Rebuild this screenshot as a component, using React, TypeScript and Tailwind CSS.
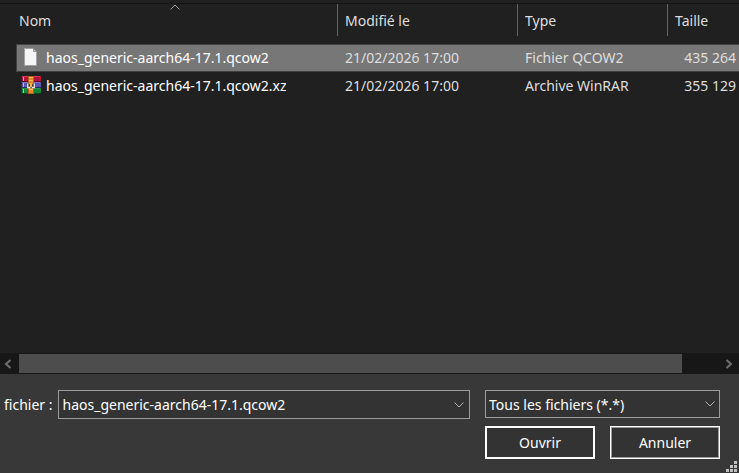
import { useState } from "react";

interface FileEntry {
  name: string;
  modified: string;
  type: string;
  size: string;
  icon: "blank" | "archive";
}

const FILES: FileEntry[] = [
  {
    name: "haos_generic-aarch64-17.1.qcow2",
    modified: "21/02/2026 17:00",
    type: "Fichier QCOW2",
    size: "435 264",
    icon: "blank",
  },
  {
    name: "haos_generic-aarch64-17.1.qcow2.xz",
    modified: "21/02/2026 17:00",
    type: "Archive WinRAR",
    size: "355 129",
    icon: "archive",
  },
];

function BlankFileIcon() {
  return (
    <svg width="20" height="20" viewBox="0 0 20 20" className="shrink-0" aria-hidden>
      <path d="M3.5 .5h9l3 3v14h-12z" fill="#f6f6f6" stroke="#a3a3a3" />
      <path d="M12.5 .5v3h3z" fill="#d2d2d2" stroke="#828282" strokeWidth=".8" />
    </svg>
  );
}

// three stacked books held together by a buckled strap
function ArchiveIcon() {
  return (
    <svg width="20" height="20" viewBox="0 0 20 20" className="shrink-0" aria-hidden>
      <path d="M0 0h20v5H0z" fill="#b5123c" />
      <path d="M1 0h18v1H1z" fill="#d23a62" />
      <path d="M0 0h1v6H0zM0 5h20v1H0z" fill="#5e0a24" />
      <path d="M0 6h20v5H0z" fill="#5656b0" />
      <path d="M1 6h18v1H1z" fill="#7676c8" />
      <path d="M0 6h1v6H0zM0 11h20v1H0z" fill="#292963" />
      <path d="M0 12h20v5H0z" fill="#148238" />
      <path d="M1 12h18v1H1z" fill="#2a9a4c" />
      <path d="M0 12h1v6H0zM0 17h20v1H0z" fill="#07451c" />
      <path d="M2 1h1v4H2zM2 7h1v4H2zM2 13h1v4H2z" fill="#e8b94b" />
      <path d="M7 0h6v18H7z" fill="#b5601a" />
      <path d="M8 1h4v16H8z" fill="#df8a2c" />
      <path d="M8 1h4v1H8zM8 4h4v1H8zM8 13h4v1H8z" fill="#f8bd58" />
      <path d="M6 8h8v4H6z" fill="#4a3a34" />
      <path d="M6.7 7.5v4h2.6M13.3 7.5v4h-2.6" fill="none" stroke="#e6e6e6" strokeWidth="1.3" />
      <path d="M9 7h2v4H9z" fill="#f0b548" />
    </svg>
  );
}

function ChevronDown() {
  return (
    <svg width="10" height="6" viewBox="0 0 10 6" fill="none" stroke="#b4b4b4" aria-hidden>
      <path d="M.5 .5 5 5 9.5 .5" />
    </svg>
  );
}

const headCell =
  "h-8 border-r border-[#636363] p-0 pt-0.5 pl-[7px] text-left font-normal text-[#dedede]";
const metaCell = "truncate p-0 pl-[7px]";

export default function App() {
  const [selected, setSelected] = useState(0);
  const [fileName, setFileName] = useState(FILES[0].name);

  const pick = (index: number) => {
    setSelected(index);
    setFileName(FILES[index].name);
  };

  return (
    <div className="flex min-h-screen flex-col overflow-hidden bg-[#202020] font-['Noto_Sans','Segoe_UI',sans-serif] text-sm text-white">
      <main className="flex-1 border-t-[3px] border-[#202020]">
        <div className="border-t border-[#151515] pl-4">
          <table className="w-full table-fixed border-separate border-spacing-0">
            <colgroup>
              <col />
              <col className="w-[180px]" />
              <col className="w-[150px]" />
              <col className="w-[71px]" />
            </colgroup>
            <thead>
              <tr>
                <th className={`relative ${headCell}`} aria-sort="ascending">
                  <button className="-ml-1">Nom</button>
                  <svg
                    width="10"
                    height="6"
                    viewBox="0 0 10 6"
                    fill="none"
                    stroke="#a0a0a0"
                    className="absolute top-0 right-1 left-0 mx-auto"
                    aria-hidden
                  >
                    <path d="M.5 5.5 5 1 9.5 5.5" />
                  </svg>
                </th>
                <th className={headCell}>
                  <button>Modifié le</button>
                </th>
                <th className={headCell}>
                  <button>Type</button>
                </th>
                <th className="p-0 pt-0.5 pl-[7px] text-left font-normal text-[#dedede]">
                  <button>Taille</button>
                </th>
              </tr>
            </thead>
            <tbody className="before:block before:h-2">
              {FILES.map((file, index) => {
                const edge =
                  index === selected
                    ? "h-7 border-y border-[#424242] bg-[#777777]"
                    : "h-7 border-y border-transparent";
                return (
                  <tr
                    key={file.name}
                    aria-selected={index === selected}
                    onClick={() => pick(index)}
                    className="text-[#dedede]"
                  >
                    <td
                      className={`p-0 ${edge} ${index === selected ? "border-l" : ""}`}
                    >
                      <div
                        className={`flex items-center gap-[5px] text-white ${
                          index === selected ? "pl-1" : "pl-[5px]"
                        }`}
                      >
                        {file.icon === "blank" ? <BlankFileIcon /> : <ArchiveIcon />}
                        <span className="truncate">{file.name}</span>
                      </div>
                    </td>
                    <td className={`${metaCell} ${edge}`}>{file.modified}</td>
                    <td className={`${metaCell} ${edge}`}>{file.type}</td>
                    <td className={`p-0 pr-[3px] text-right whitespace-nowrap ${edge}`}>
                      {file.size}
                    </td>
                  </tr>
                );
              })}
            </tbody>
          </table>
        </div>
      </main>

      <div className="flex h-[21px] items-stretch border-y border-[#171717] bg-[#171717]">
        <button className="flex w-[19px] items-center pl-1" aria-label="Défiler à gauche">
          <svg width="8" height="10" viewBox="0 0 8 10" fill="none" stroke="#707070" strokeWidth="2" aria-hidden>
            <path d="M6.5 1 2 5 6.5 9" />
          </svg>
        </button>
        <div className="flex-1 bg-[#4d4d4d]" />
        <div className="w-[37px]" />
        <button className="flex w-5 items-center pl-1.5" aria-label="Défiler à droite">
          <svg width="8" height="10" viewBox="0 0 8 10" fill="none" stroke="#707070" strokeWidth="2" aria-hidden>
            <path d="M1.5 1 6 5 1.5 9" />
          </svg>
        </button>
      </div>

      <footer className="relative flex h-[99px] gap-[15px] bg-[#383838] pt-4 pr-[19px] pl-1">
        <div className="flex h-[29px] flex-1 items-center gap-1.5">
          <label htmlFor="file-name" className="whitespace-nowrap">
            fichier :
          </label>
          <div className="flex h-full min-w-0 flex-1 items-center border border-[#9b9b9b] bg-[#333333]">
            <input
              id="file-name"
              value={fileName}
              onChange={(e) => setFileName(e.target.value)}
              className="h-full min-w-0 flex-1 bg-transparent pl-[3px] outline-none"
            />
            <button className="px-[5px]" aria-label="Fichiers récents">
              <ChevronDown />
            </button>
          </div>
        </div>

        <div className="flex w-[235px] flex-col gap-2">
          <div className="grid h-7 items-center">
            <select
              aria-label="Type de fichier"
              className="col-start-1 row-start-1 h-full w-full appearance-none border border-[#9b9b9b] bg-[#333333] pt-0.5 pl-[3px]"
            >
              <option>Tous les fichiers (*.*)</option>
            </select>
            <span className="pointer-events-none col-start-1 row-start-1 justify-self-end pr-[5px]">
              <ChevronDown />
            </span>
          </div>
          <div className="grid h-[33px] grid-cols-2 gap-[15px]">
            <button className="border-2 border-white bg-[#333333]">Ouvrir</button>
            <button className="border border-white bg-[#333333] inset-ring inset-ring-[#9b9b9b]">
              Annuler
            </button>
          </div>
        </div>

        <svg
          width="11"
          height="11"
          viewBox="0 0 11 11"
          fill="#bfbfbf"
          className="absolute right-0.5 bottom-px"
          aria-hidden
        >
          <path d="M8 0h3v3H8zM4 4h3v3H4zM8 4h3v3H8zM0 8h3v3H0zM4 8h3v3H4zM8 8h3v3H8z" />
        </svg>
      </footer>
    </div>
  );
}
